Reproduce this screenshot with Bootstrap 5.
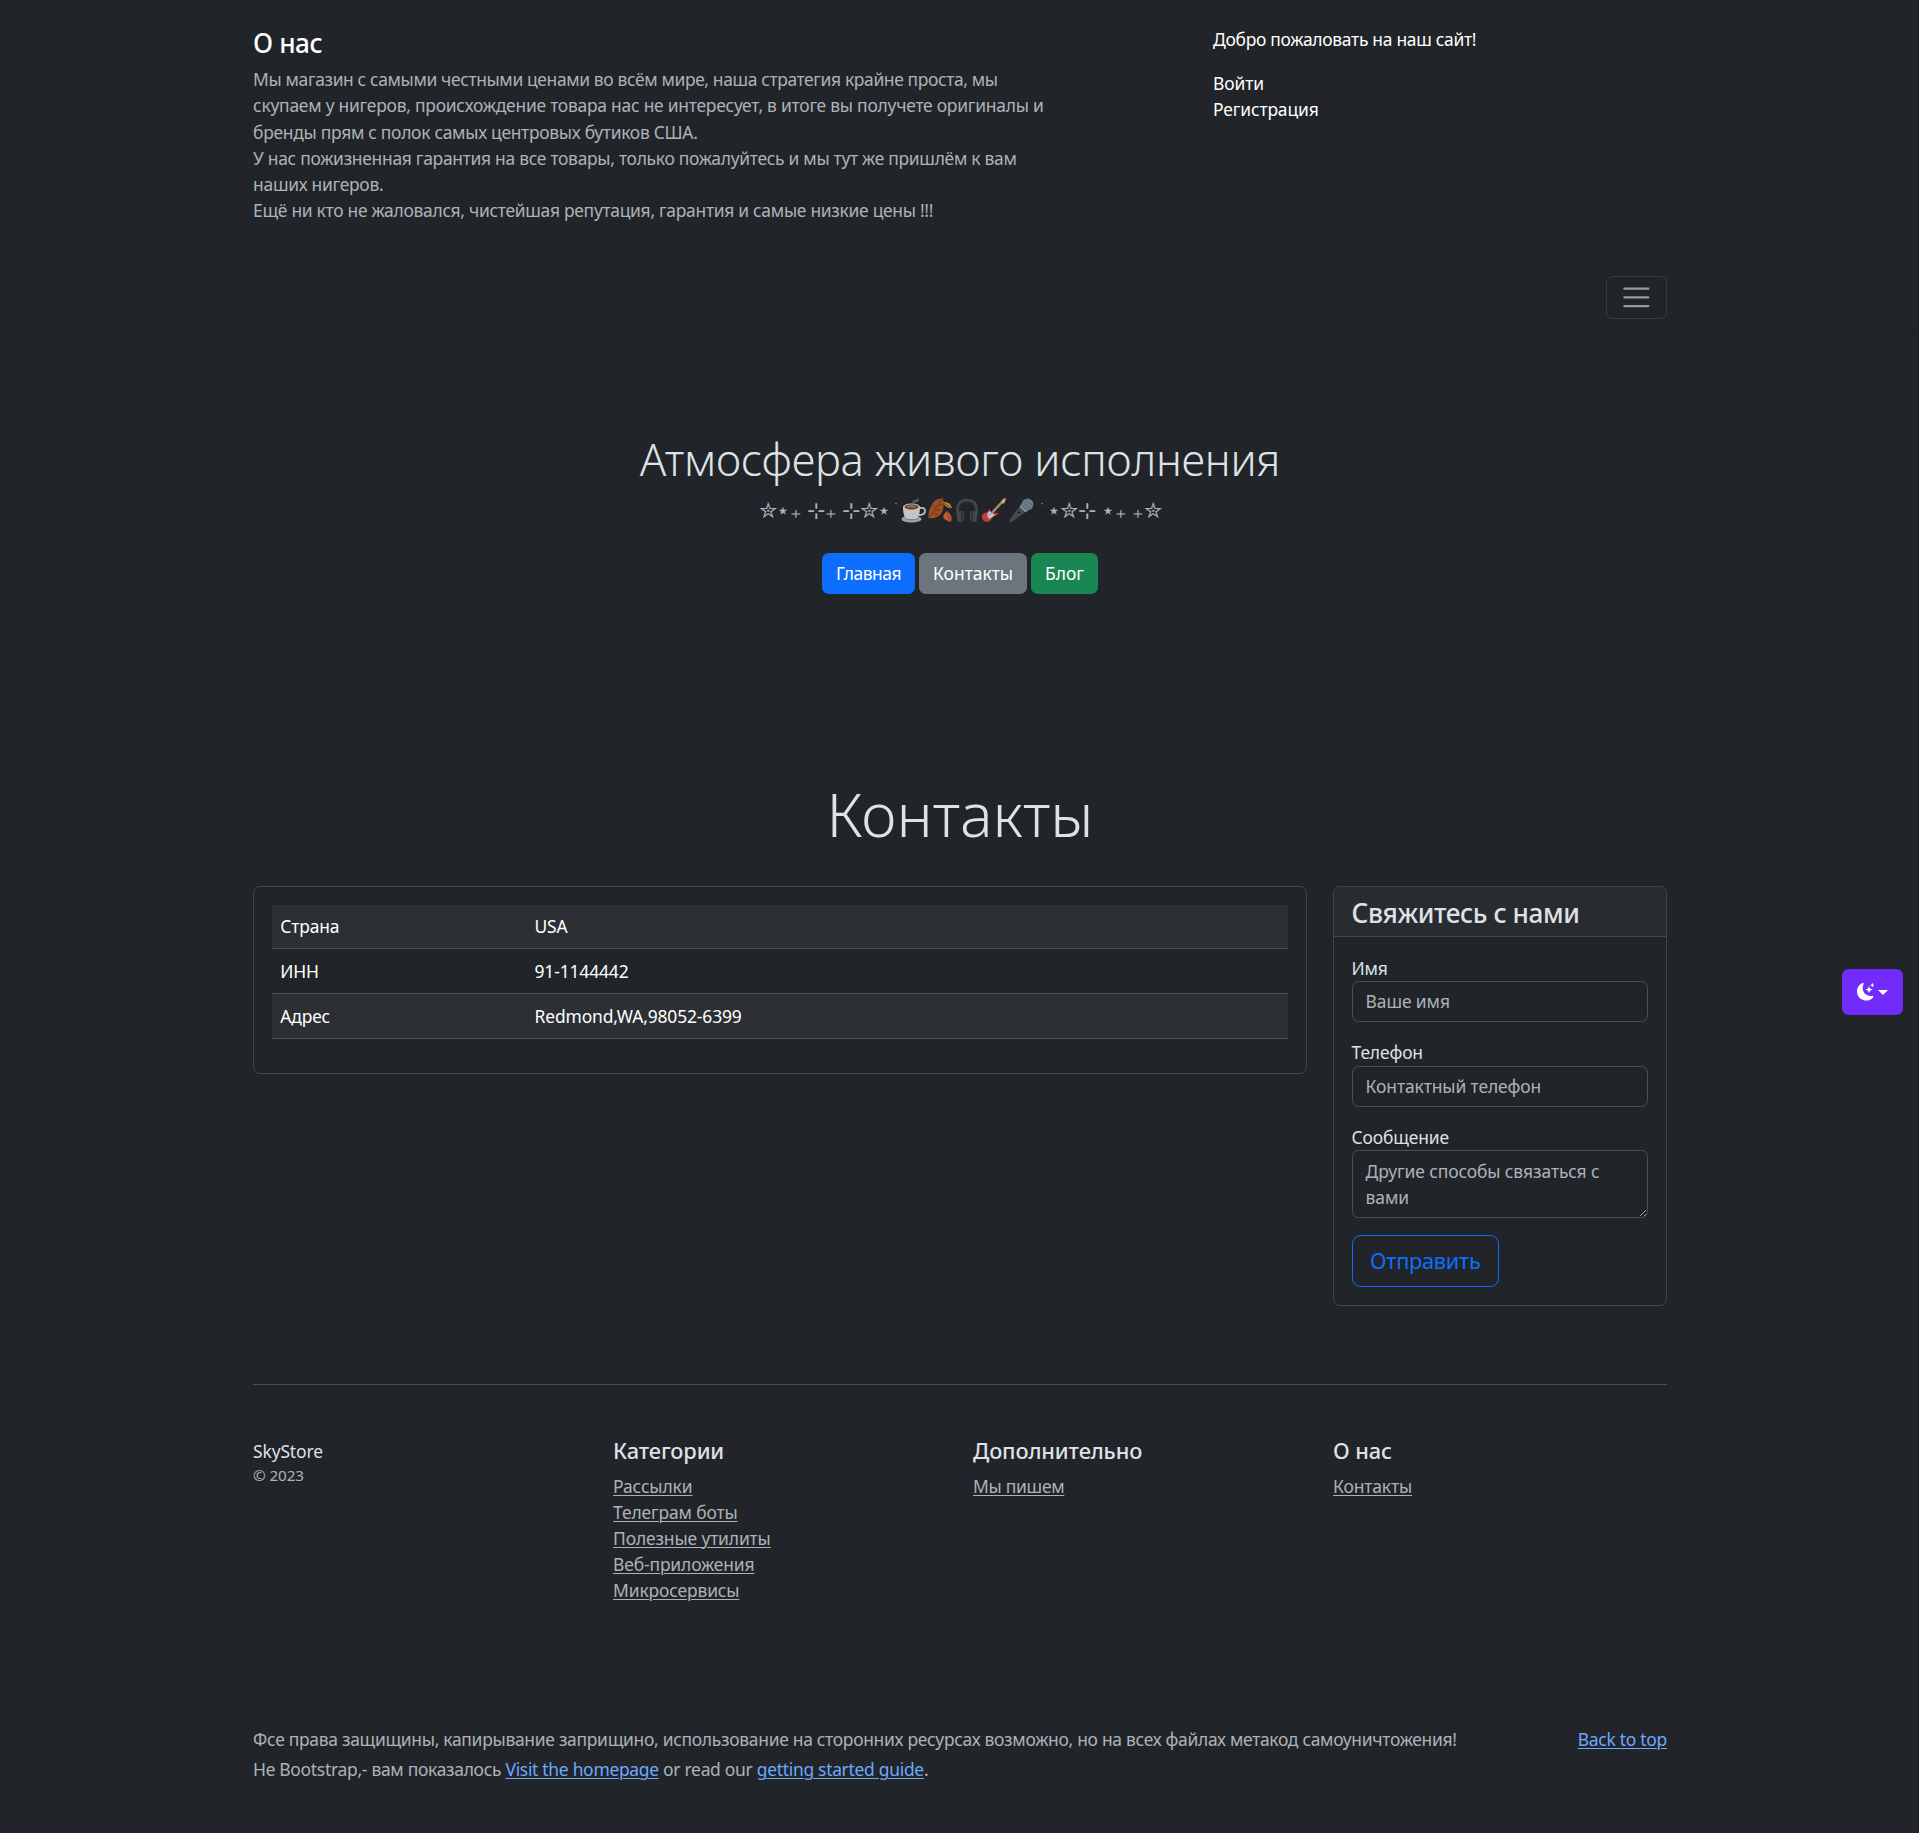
<!DOCTYPE html>
<html lang="ru" data-bs-theme="dark">
<head>
<meta charset="utf-8">
<meta name="viewport" content="width=device-width, initial-scale=1">
<title>SkyStore</title>
<link href="https://cdn.jsdelivr.net/npm/bootstrap@5.3.0/dist/css/bootstrap.min.css" rel="stylesheet">
<style>
:root { font-size: 17.4545px; }
body { font-family: "Noto Sans", "Open Sans", sans-serif; background: #212529; color: #dee2e6; overflow-x: hidden; padding-left: 1px; letter-spacing: -.14px; }
.container { max-width: 1440px; }
h1, h2, h3, h4, h5 { color: inherit; }
h4 { padding-top: 2px; margin-bottom: calc(.5rem - 2px); letter-spacing: -.4px; }
.head-tight { margin-bottom: -2px; }
.hero { letter-spacing: -.24px; }
.tight { letter-spacing: -.29px; }
.tight-l1 { letter-spacing: -.37px; }
.tight-l2 { letter-spacing: -.245px; }
.soft { color: rgba(222,226,230,.75) !important; }
.bluelink { color: #6ea8fe; }
a { text-underline-offset: 2px; text-decoration-thickness: 1px; }
.site-nav { background: #212529; box-shadow: 0 .125rem .25rem rgba(0,0,0,.075); }
.site-nav .navbar-toggler { color: rgba(255,255,255,.55); border-color: rgba(255,255,255,.1); }
.burger { width: 1.5em; height: 1.5em; display: block; }
.actions { word-spacing: -.6px; }
.actions .btn { letter-spacing: 0; }
.actions .btn-primary { letter-spacing: -.5px; }
.page-title { margin-bottom: calc(.5rem + 1px); letter-spacing: 0; }
.panel { background: #212529; border: 1px solid #424649; border-radius: .375rem; }
.panel .card-header { background: #282c30; border-bottom: 1px solid #424649; color: #dee2e6; }
.facts { --bs-table-bg: #212529; --bs-table-color: #fff; --bs-table-striped-bg: #2c3034; --bs-table-striped-color: #fff; color: #fff; border-color: #4d5154; }
.facts td:first-child { width: 25%; }
.form-control, .form-control:focus { background: #212529; border: 1px solid #495057; color: #dee2e6; letter-spacing: -.1px; }
.form-control::placeholder { color: rgba(222,226,230,.75); }
.foot-line { border-top: 1px solid #495057; }
.stars { display: flex; justify-content: center; align-items: center; font-family: "DejaVu Sans", sans-serif; height: 1.875rem; white-space: pre; letter-spacing: -.65px; }
.stars span { padding-top: 2px; }
.emo { width: 25px; height: 25px; margin-right: 2.2px; opacity: .8; flex: none; }
.theme-switch { position: absolute; top: 969px; right: 16px; background: #712cf9; color: #fff; padding: .6rem .75rem; height: 46px; width: 61px; border-radius: .375rem; }
</style>
<script src="https://cdn.jsdelivr.net/npm/bootstrap@5.3.0/dist/js/bootstrap.bundle.min.js"></script>
</head>
<body>
<header>
  <div class="container">
    <div class="row py-4">
      <div class="col-md-7">
        <h4 class="text-white">О нас</h4>
        <p class="soft tight text-nowrap"><span class="tight-l1">Мы магазин с самыми честными ценами во всём мире, наша стратегия крайне проста, мы</span><br><span class="tight-l2">скупаем у нигеров, происхождение товара нас не интересует, в итоге вы получете оригиналы и</span><br>бренды прям с полок самых центровых бутиков США.<br>У нас пожизненная гарантия на все товары, только пожалуйтесь и мы тут же пришлём к вам<br>наших нигеров.<br>Ещё ни кто не жаловался, чистейшая репутация, гарантия и самые низкие цены !!!</p>
      </div>
      <div class="col-md-4 offset-md-1">
        <p class="text-white tight">Добро пожаловать на наш сайт!</p>
        <ul class="list-unstyled">
          <li><a href="#" class="text-white text-decoration-none">Войти</a></li>
          <li><a href="#" class="text-white text-decoration-none">Регистрация</a></li>
        </ul>
      </div>
    </div>
  </div>
  <nav class="navbar site-nav">
    <div class="container">
      <button class="navbar-toggler ms-auto" type="button" aria-label="Меню">
        <svg class="burger" viewBox="0 0 30 30"><path stroke="currentColor" stroke-linecap="round" stroke-miterlimit="10" stroke-width="2" d="M4 7h22M4 15h22M4 23h22"/></svg>
      </button>
    </div>
  </nav>
</header>

<main>
  <section class="container py-5 text-center">
    <div class="py-5">
      <h1 class="fw-light hero">Атмосфера живого исполнения</h1>
      <div class="lead soft stars mb-3"><span>✮⋆₊ ⊹₊ ⊹✮⋆˙</span><svg class="emo" viewBox="0 0 25 25"><path d="M13 6q-4-3 1-4q3-1 3-2q2 2-1 4q-3 0-3 2z" fill="#5d6d75"/><ellipse cx="10.500" cy="21" rx="10" ry="3.600" fill="#b9c8cd"/><ellipse cx="10.500" cy="20.300" rx="7" ry="2" fill="#8ba0a8"/><path d="M19 10q5-1 5 3t-6 4" fill="none" stroke="#e4e4e4" stroke-width="1.800"/><path d="M2 9q0 11 4.500 12h8q4.500-1 4.500-12z" fill="#eee"/><ellipse cx="10.500" cy="9" rx="8.500" ry="3.600" fill="#f5f5f5"/><ellipse cx="10.500" cy="9" rx="7" ry="2.700" fill="#8d5140"/><path d="M6 9q4-2 8 0" stroke="#d09a82" fill="none"/></svg><svg class="emo" viewBox="0 0 25 25"><path d="M15 .5Q6 0 4 7Q0 12 .5 20Q9 21 13 16Q17 10 15 .5z" fill="#bf5b21"/><path d="M14 1Q9 10 .5 20M9 9H5M7 12h5M10 7h4M5 15l5 2" stroke="#813a16" fill="none"/><path d="M15 4q7-1 9 6q-6 1-9-6z" fill="#f29a26"/><path d="M19 13q6 4 4 11q-7-2-8-5q1-4 4-6z" fill="#ed6c30"/><path d="M16 5l7 5M19 14l3 9" stroke="#a84b1e" fill="none"/></svg><svg class="emo" viewBox="0 0 25 25"><path d="M2.500 16Q1 2 12 2T21.500 16" fill="none" stroke="#4b5257" stroke-width="2.600"/><path d="M4 14Q4 4.500 12 4.500T20 14" fill="none" stroke="#2e3438"/><rect x="2" y="13" width="7" height="11" rx="3" fill="#4b5257"/><rect x="15" y="13" width="7" height="11" rx="3" fill="#4b5257"/><path d="M7 14v9M17 14v9" stroke="#30363a" stroke-width="2"/></svg><svg class="emo" viewBox="0 0 25 25"><path d="M9 16L21 3" stroke="#d9a36a" stroke-width="2.400"/><path d="M19 4l2-3 3-1-1 4-2 2z" fill="#f3cf8d"/><path d="M8 10Q6 15 2 15Q-2 18 1 22Q5 26 9 22Q11 18 15 17Q18 14 14 15Q11 16 10 14Q7 13 8 10z" fill="#f0413b"/><path d="M7 13l6 4-6 4-2-4z" fill="#f5f5f5"/><path d="M4 20l8-7" stroke="#8f9ba0"/></svg><svg class="emo" viewBox="0 0 25 25"><path d="M12 7L1 21q-1 3 1 3l2-1L18 13z" fill="#50585d"/><path d="M12 6l7 7-3 1-5-5z" fill="#84c5dc"/><circle cx="18.500" cy="6.500" r="6" fill="#78878f"/><path d="M13 5l7 7M15 2l8 8M19 1l5 5" stroke="#a1b0b7" stroke-width=".7"/><path d="M9 14l1.500 1" stroke="#111" stroke-width="2"/></svg><span>˙⋆✮⊹ ⋆₊ ₊✮</span></div>
      <p class="mb-3 actions">
        <a href="#" class="btn btn-primary my-2">Главная</a>
        <a href="#" class="btn btn-secondary my-2">Контакты</a>
        <a href="#" class="btn btn-success my-2">Блог</a>
      </p>
    </div>
  </section>

  <div class="container pt-5">
    <h1 class="display-4 fw-light text-center page-title pb-4">Контакты</h1>
    <div class="row">
      <div class="col-md-9">
        <div class="card panel">
          <div class="card-body">
            <table class="table table-striped facts">
              <tbody>
                <tr><td>Страна</td><td>USA</td></tr>
                <tr><td>ИНН</td><td>91-1144442</td></tr>
                <tr><td>Адрес</td><td>Redmond,WA,98052-6399</td></tr>
              </tbody>
            </table>
          </div>
        </div>
      </div>
      <div class="col-md-3">
        <div class="card panel mb-4">
          <div class="card-header"><h4 class="mt-0 head-tight">Свяжитесь с нами</h4></div>
          <div class="card-body">
            <div class="mb-3"><label for="f-name">Имя</label><input id="f-name" class="form-control" placeholder="Ваше имя"></div>
            <div class="mb-3"><label for="f-tel">Телефон</label><input id="f-tel" class="form-control" placeholder="Контактный телефон"></div>
            <div class="mb-3"><label for="f-msg">Сообщение</label><textarea id="f-msg" class="form-control" rows="2" placeholder="Другие способы связаться с вами"></textarea></div>
            <button type="button" class="btn btn-lg btn-outline-primary tight">Отправить</button>
          </div>
        </div>
      </div>
    </div>

    <div class="foot-line my-5 pt-5">
      <div class="row">
        <div class="col-md-3">SkyStore<small class="d-block mb-3 soft">© 2023</small></div>
        <div class="col-md-3">
          <h5>Категории</h5>
          <ul class="list-unstyled">
            <li><a class="soft" href="#">Рассылки</a></li>
            <li><a class="soft" href="#">Телеграм боты</a></li>
            <li><a class="soft" href="#">Полезные утилиты</a></li>
            <li><a class="soft" href="#">Веб-приложения</a></li>
            <li><a class="soft" href="#">Микросервисы</a></li>
          </ul>
        </div>
        <div class="col-md-3">
          <h5>Дополнительно</h5>
          <ul class="list-unstyled"><li><a class="soft tight" href="#">Мы пишем</a></li></ul>
        </div>
        <div class="col-md-3">
          <h5>О нас</h5>
          <ul class="list-unstyled"><li><a class="soft" href="#">Контакты</a></li></ul>
        </div>
      </div>
    </div>
  </div>
</main>

<footer class="soft tight pt-5 pb-4">
  <div class="container">
    <div class="d-flex justify-content-between mb-1">
      <span>Фсе права защищины, капирывание заприщино, использование на сторонних ресурсах возможно, но на всех файлах метакод самоуничтожения!</span>
      <a class="bluelink" href="#">Back to top</a>
    </div>
    <p class="mb-0">Не Bootstrap,- вам показалось <a class="bluelink" href="#">Visit the homepage</a> or read our <a class="bluelink" href="#">getting started guide</a>.</p>
  </div>
</footer>

<button class="btn theme-switch dropdown-toggle d-flex align-items-center justify-content-center" type="button" aria-label="Тема">
  <svg width="17.5" height="17.5" viewBox="0 0 16 16" fill="currentColor"><path d="M6 .278a.768.768 0 0 1 .08.858 7.208 7.208 0 0 0-.878 3.46c0 4.021 3.278 7.277 7.318 7.277.527 0 1.04-.055 1.533-.16a.787.787 0 0 1 .81.316.733.733 0 0 1-.031.893A8.349 8.349 0 0 1 8.344 16C3.734 16 0 12.286 0 7.71 0 4.266 2.114 1.312 5.124.06A.752.752 0 0 1 6 .278z"/><path d="M10.794 3.148a.217.217 0 0 1 .412 0l.387 1.162c.173.518.579.924 1.097 1.097l1.162.387a.217.217 0 0 1 0 .412l-1.162.387a1.734 1.734 0 0 0-1.097 1.097l-.387 1.162a.217.217 0 0 1-.412 0l-.387-1.162A1.734 1.734 0 0 0 9.31 6.593l-1.162-.387a.217.217 0 0 1 0-.412l1.162-.387a1.734 1.734 0 0 0 1.097-1.097l.387-1.162zM13.863.099a.145.145 0 0 1 .274 0l.258.774c.115.346.386.617.732.732l.774.258a.145.145 0 0 1 0 .274l-.774.258a1.156 1.156 0 0 0-.732.732l-.258.774a.145.145 0 0 1-.274 0l-.258-.774a1.156 1.156 0 0 0-.732-.732l-.774-.258a.145.145 0 0 1 0-.274l.774-.258c.346-.115.617-.386.732-.732L13.863.1z"/></svg>
</button>
</body>
</html>
